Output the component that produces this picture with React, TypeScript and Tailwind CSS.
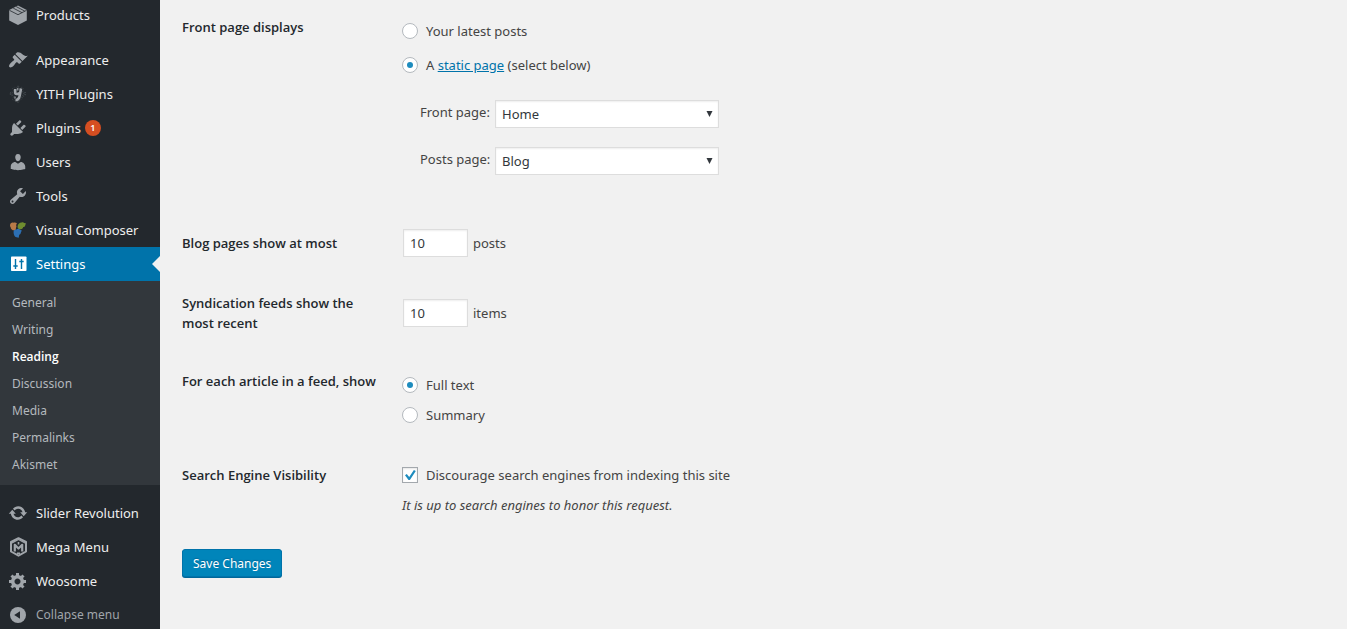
// Reading settings screen.
// Owns: the admin sidebar (menu + Settings submenu) and the reading options form.

import { useState } from "react"
import type { ReactNode } from "react"

// ---------------------------------------------------------------------------
// Icons
// ---------------------------------------------------------------------------

const Glyph = ({ d }: { d: string }) => (
  <svg viewBox="0 0 20 20" className="size-5" fill="currentColor" aria-hidden>
    <path d={d} />
  </svg>
)

const BoxIcon = () => (
  <svg viewBox="0 0 20 20" className="size-5" aria-hidden>
    <path d="M10 0.5 18.8 5v10.6L10 20 1.2 15.6V5z" fill="currentColor" />
    <path d="M1.4 5.3 10 9.7l8.6-4.4M5.2 3.1l8.9 4.6M8.2 1.6l8.6 4.5" fill="none" stroke="#23282d" strokeWidth="0.8" />
  </svg>
)

const YithIcon = () => (
  <svg viewBox="0 0 20 20" className="size-5" aria-hidden>
    <path d="M10 3 17 10l-7 7.5L3 10z" fill="none" stroke="#3a4045" strokeWidth="2.4" strokeDasharray="1 1" />
    <path d="M4 5l3-2M13 3l3 2M4 15l3 2M2.5 8v4M17.5 8v4" stroke="#3c4247" strokeWidth="1" strokeDasharray="1 1" />
    <path d="M7.2 5v3.2c0 2.4 2.6 2.2 4.2.8M13 4.5l-1.2 6.8c-.6 3.3-1.7 4.9-4.3 4.9" fill="none" stroke="currentColor" strokeWidth="2.6" />
    <path d="M9.8 4v2.6M7 12.5v2" stroke="currentColor" strokeWidth="1.2" />
  </svg>
)

const ComposerIcon = () => (
  <svg viewBox="0 0 20 20" className="size-5" aria-hidden>
    <path d="M2 5.5C2 3.4 3.7 2.2 5.5 2.7c1.2-.6 2.6-.3 3.5.7L8 5c.6 1 .6 1.9 0 2.7l-.4 2.9-2.8-.4C3.3 9.3 2.6 8.2 2.7 7.2 2.2 6.7 2 6.1 2 5.5z" fill="#b87a48" />
    <path d="M9.6 6.5c.1-2.3 1.7-4 4-4 .8-.5 2-.3 2.6.4l1.7.3-.7 2.2c-.3 1-1 1.6-2 1.7-.2 1.5-1.3 2.3-2.6 2.1-1.8.4-3.1-.8-3-2.7z" fill="#6f8d2f" />
    <path d="M5.6 12.6c-.3-1.9 1-3.2 2.7-3.1 1.1-1 2.7-.9 3.5.1l2 .9-.9 2.1c-.1 1.2-.8 1.9-1.7 2.2l-.5 2.9-3.1-.6c-1.3-1-2-2.6-2-4.5z" fill="#2c6fb3" />
  </svg>
)

const MegaIcon = () => (
  <svg viewBox="0 0 20 20" className="size-5" fill="none" stroke="currentColor" strokeLinejoin="round" aria-hidden>
    <path d="M10.5 1.2 18 5v9.5l-7.500 4.200L3 14.5V5z" strokeWidth="2" />
    <path d="M3.5 6.2 10.5 2.5l7 3.7" strokeWidth="1.2" />
    <path d="M6.8 14.5V7.800l3.700 3.700 3.700-3.700v6.700" strokeWidth="2.2" />
    <path d="M10.5 5v2.5M9 16.2h3" strokeWidth="1.6" />
  </svg>
)

const SlidersIcon = () => (
  <svg viewBox="0 0 20 20" className="size-5" aria-hidden>
    <rect x="3" y="2.5" width="15.5" height="14.5" rx="0.8" fill="currentColor" />
    <path d="M7.5 5v10M5.3 12h4.4M13.5 5v10M11.3 7.5h4.400" stroke="#0073aa" strokeWidth="1.4" />
  </svg>
)

const CollapseIcon = () => (
  <svg viewBox="0 0 20 20" className="size-5" aria-hidden>
    <circle cx="10" cy="10" r="8" fill="currentColor" />
    <path d="M6.2 10 12 6.200v7.600z" fill="#23282d" />
  </svg>
)

const PATHS = {
  appearance:
    "M14.48 11.06L7.41 3.99l1.5-1.5c.5-.56 2.3-.47 3.51.32 1.21.8 1.43 1.28 2.91 2.1 1.18.64 2.45 1.26 4.45.85zm-.71.71L6.7 4.7 4.93 6.47c-.39.39-.39 1.02 0 1.41l1.06 1.06c.39.39.39 1.03 0 1.42-.6.6-1.43 1.11-2.21 1.69-.35.26-.7.53-1.01.84C1.43 14.23.4 16.08 1.4 17.07c.99 1 2.84-.03 4.18-1.36.31-.31.58-.66.85-1.02.57-.78 1.08-1.61 1.69-2.21.39-.39 1.02-.39 1.41 0l1.06 1.06c.39.39 1.02.39 1.41 0z",
  plugins:
    "M13.11 4.36L9.87 7.6 8 5.73l3.24-3.24c.35-.34 1.05-.2 1.56.32.52.51.66 1.21.31 1.55zm-8 1.77l.91-1.12 9.01 9.01-1.19.84c-.71.71-2.63 1.16-3.82 1.16H6.14L4.9 17.26c-.59.59-1.54.59-2.12 0-.59-.58-.59-1.53 0-2.12l1.24-1.24v-3.88c0-1.13.4-3.19 1.09-3.89zm7.26 3.97l3.24-3.24c.34-.35 1.04-.21 1.55.31.52.51.66 1.21.31 1.55l-3.24 3.25z",
  users:
    "M10 9.25c-2.27 0-2.73-3.44-2.73-3.44C7 4.02 7.82 2 9.97 2c2.16 0 2.98 2.02 2.71 3.81 0 0-.41 3.44-2.68 3.44zm0 2.57L12.72 10c2.39 0 4.52 2.33 4.52 4.53v2.49s-3.65 1.13-7.24 1.13c-3.65 0-7.24-1.13-7.24-1.13v-2.49c0-2.25 1.94-4.48 4.47-4.48z",
  tools:
    "M16.68 9.77c-1.34 1.34-3.3 1.67-4.95.99l-5.41 6.52c-.99.99-2.59.99-3.58 0s-.99-2.59 0-3.57l6.52-5.42c-.68-1.65-.35-3.61.99-4.95 1.28-1.28 3.12-1.62 4.72-1.06l-2.89 2.89 2.82 2.82 2.86-2.87c.53 1.58.18 3.39-1.08 4.65zM3.81 16.21c.4.39 1.04.39 1.43 0 .4-.4.4-1.04 0-1.43-.39-.4-1.03-.4-1.43 0-.39.39-.39 1.03 0 1.43z",
  update:
    "M10.2 3.28c3.53 0 6.43 2.61 6.92 6h2.08l-3.5 4-3.5-4h2.32c-.45-1.97-2.21-3.45-4.32-3.45-1.45 0-2.73.71-3.54 1.78L4.95 5.66C6.23 4.2 8.11 3.28 10.2 3.28zm-.4 13.44c-3.52 0-6.43-2.61-6.92-6H.8l3.5-4c1.17 1.33 2.33 2.67 3.5 4H5.48c.45 1.97 2.21 3.45 4.32 3.45 1.45 0 2.73-.71 3.54-1.78l1.71 1.95c-1.28 1.46-3.15 2.38-5.25 2.38z",
  generic:
    "M18 12h-2.18c-.17.7-.44 1.35-.81 1.93l1.54 1.54-2.1 2.1-1.54-1.54c-.58.36-1.23.63-1.91.79V19H8v-2.18c-.68-.16-1.33-.43-1.91-.79l-1.54 1.54-2.12-2.12 1.54-1.54c-.36-.58-.63-1.23-.79-1.91H1V9.03h2.17c.16-.7.44-1.35.8-1.94L2.43 5.55l2.1-2.1 1.54 1.54c.58-.37 1.24-.64 1.93-.81V2h3v2.18c.68.16 1.33.43 1.91.79l1.54-1.54 2.12 2.12-1.54 1.54c.36.59.64 1.24.8 1.94H18V12zm-8.5 1.5c1.66 0 3-1.34 3-3s-1.34-3-3-3-3 1.34-3 3 1.34 3 3 3z",
}

// ---------------------------------------------------------------------------
// Sidebar
// ---------------------------------------------------------------------------

type MenuEntry = { label: string; icon: ReactNode; badge?: number; current?: boolean }

const MENU_GROUPS: MenuEntry[][] = [
  [{ label: "Products", icon: <BoxIcon /> }],
  [
    { label: "Appearance", icon: <Glyph d={PATHS.appearance} /> },
    { label: "YITH Plugins", icon: <YithIcon /> },
    { label: "Plugins", icon: <Glyph d={PATHS.plugins} />, badge: 1 },
    { label: "Users", icon: <Glyph d={PATHS.users} /> },
    { label: "Tools", icon: <Glyph d={PATHS.tools} /> },
    { label: "Visual Composer", icon: <ComposerIcon /> },
    { label: "Settings", icon: <SlidersIcon />, current: true },
  ],
  [
    { label: "Slider Revolution", icon: <Glyph d={PATHS.update} /> },
    { label: "Mega Menu", icon: <MegaIcon /> },
    { label: "Woosome", icon: <Glyph d={PATHS.generic} /> },
  ],
]

const SUBMENU = ["General", "Writing", "Reading", "Discussion", "Media", "Permalinks", "Akismet"]

const MenuItem = ({ label, icon, badge, current }: MenuEntry) => (
  <li>
    <a
      href="#"
      className={[
        "relative flex h-[34px] items-center gap-2 pl-2 text-[13px] whitespace-nowrap",
        current ? "bg-[#0073aa] text-white" : "text-[#eee]",
      ].join(" ")}
    >
      <span className={current ? "text-white" : "text-[#a0a5aa]"}>{icon}</span>
      <span>{label}</span>
      {badge && (
        <span className="-ml-1 flex size-4 items-center justify-center rounded-full bg-[#d54e21] text-[9px] font-semibold text-white">
          {badge}
        </span>
      )}
      {current && (
        <span className="absolute top-[9px] right-0 border-y-8 border-r-8 border-y-transparent border-r-[#f1f1f1]" aria-hidden />
      )}
    </a>
    {current && (
      <ul className="bg-[#32373c] pt-2 pb-[7px] text-xs">
        {SUBMENU.map((item) => (
          <li key={item}>
            <a
              href="#"
              className={[
                "flex h-[27px] items-center pl-3",
                item === "Reading" ? "font-['Open_Sans',sans-serif] font-semibold text-white" : "text-[#b4b9be]",
              ].join(" ")}
            >
              {item}
            </a>
          </li>
        ))}
      </ul>
    )}
  </li>
)

const Sidebar = () => (
  <nav className="w-40 shrink-0 bg-[#23282d]" aria-label="Main menu">
    <div className="-mt-0.5 flex flex-col gap-[11px]">
      {MENU_GROUPS.map((group, i) => (
        <ul key={i}>
          {group.map((entry) => (
            <MenuItem key={entry.label} {...entry} />
          ))}
        </ul>
      ))}
    </div>
    <button type="button" className="flex h-[34px] w-full items-center gap-2 pl-2 text-xs whitespace-nowrap text-[#a0a5aa]">
      <CollapseIcon />
      Collapse menu
    </button>
  </nav>
)

// ---------------------------------------------------------------------------
// Form controls
// ---------------------------------------------------------------------------

const FormRow = ({ title, className = "", children }: { title: ReactNode; className?: string; children: ReactNode }) => (
  <div className={`grid grid-cols-[200px_1fr] gap-x-5 ${className}`}>
    <div className="font-['Open_Sans',sans-serif] font-semibold text-[#23282d]">{title}</div>
    <div>{children}</div>
  </div>
)

const Radio = ({
  name,
  checked,
  onChange,
  children,
}: {
  name: string
  checked: boolean
  onChange: () => void
  children: ReactNode
}) => (
  <label className="flex items-center gap-2">
    <input
      type="radio"
      name={name}
      checked={checked}
      onChange={onChange}
      className="flex size-4 appearance-none items-center justify-center rounded-full border border-[#b4b9be] bg-white before:size-1.5 before:rounded-full checked:before:bg-[#1e8cbe]"
    />
    <span>{children}</span>
  </label>
)

const PageSelect = ({ id, label, options }: { id: string; label: string; options: string[] }) => (
  <div className="flex items-start">
    <label htmlFor={id} className="w-[75px] leading-6">{label}</label>
    <div className="relative">
      <select
        id={id}
        className="h-7 w-56 appearance-none border border-[#ddd] bg-white pl-1.5 text-[#32373c] shadow-[inset_0_1px_2px_rgba(0,0,0,0.07)] outline-none"
      >
        {options.map((o) => (
          <option key={o}>{o}</option>
        ))}
      </select>
      <svg viewBox="0 0 7 6" className="pointer-events-none absolute top-[11px] right-1.5 h-1.5 w-[7px]" fill="#32373c" aria-hidden>
        <path d="M0.5 0h6L3.5 6z" />
      </svg>
    </div>
  </div>
)

const CountInput = ({ id, unit }: { id: string; unit: string }) => (
  <div className="flex items-center gap-[5px] pl-px">
    <input
      id={id}
      type="text"
      inputMode="numeric"
      defaultValue="10"
      className="h-7 w-[65px] border border-[#ddd] bg-white px-1.5 text-[#32373c] shadow-[inset_0_1px_2px_rgba(0,0,0,0.07)] outline-none"
    />
    <span>{unit}</span>
  </div>
)

// ---------------------------------------------------------------------------
// Page
// ---------------------------------------------------------------------------

export default function App() {
  const [front, setFront] = useState<"posts" | "page">("page")
  const [feed, setFeed] = useState<"full" | "summary">("full")
  const [discourage, setDiscourage] = useState(true)

  return (
    <div className="flex h-screen overflow-hidden bg-[#f1f1f1] font-['Noto_Sans',sans-serif] text-[13px] leading-5 text-[#444]">
      <Sidebar />
      <main className="min-w-0 flex-1 pt-[17px] pl-[22px]">
        <form onSubmit={(e) => e.preventDefault()}>
          <div className="flex flex-col gap-9">
            <FormRow title="Front page displays" className="pb-[18px]">
              <div className="flex flex-col gap-3.5 pt-1">
                <Radio name="front" checked={front === "posts"} onChange={() => setFront("posts")}>
                  Your latest posts
                </Radio>
                <Radio name="front" checked={front === "page"} onChange={() => setFront("page")}>
                  A <a href="#" className="text-[#0073aa] underline">static page</a> (select below)
                </Radio>
              </div>
              <div className="flex flex-col gap-[19px] pt-[25px] pl-[18px]">
                <PageSelect id="front-page" label="Front page:" options={["Home", "Shop"]} />
                <PageSelect id="posts-page" label="Posts page:" options={["Blog", "News"]} />
              </div>
            </FormRow>

            <FormRow title={<label htmlFor="blog-count">Blog pages show at most</label>} className="items-center">
              <CountInput id="blog-count" unit="posts" />
            </FormRow>

            <FormRow
              title={<label htmlFor="feed-count">Syndication feeds show the most recent</label>}
              className="items-center"
            >
              <CountInput id="feed-count" unit="items" />
            </FormRow>

            <FormRow title="For each article in a feed, show" className="pt-0.5">
              <div className="flex flex-col gap-2.5 pt-1">
                <Radio name="feed" checked={feed === "full"} onChange={() => setFeed("full")}>
                  Full text
                </Radio>
                <Radio name="feed" checked={feed === "summary"} onChange={() => setFeed("summary")}>
                  Summary
                </Radio>
              </div>
            </FormRow>

            <FormRow title="Search Engine Visibility" className="pt-1">
              <label className="flex items-center gap-2">
                <span className="relative size-4">
                  <input
                    type="checkbox"
                    checked={discourage}
                    onChange={(e) => setDiscourage(e.target.checked)}
                    className="block size-4 appearance-none border border-[#a3a8ad] bg-white shadow-[inset_0_1px_2px_rgba(0,0,0,0.1)]"
                  />
                  {discourage && (
                    <svg viewBox="0 0 16 16" className="pointer-events-none absolute inset-0 size-4" fill="#1e8cbe" aria-hidden>
                      <path d="M3 8.2 4.8 7l2.4 2.9L11.9 3l1.9 1-5.9 9H6.5z" />
                    </svg>
                  )}
                </span>
                Discourage search engines from indexing this site
              </label>
              <p className="pt-2.5 italic">It is up to search engines to honor this request.</p>
            </FormRow>
          </div>

          <button
            type="submit"
            className="mt-[34px] h-7 rounded-[3px] border border-[#0073aa] bg-[#0085ba] px-2.5 pt-px text-xs text-white shadow-[0_1px_0_#006799] [text-shadow:0_-1px_1px_#006799]"
          >
            Save Changes
          </button>
        </form>
      </main>
    </div>
  )
}
